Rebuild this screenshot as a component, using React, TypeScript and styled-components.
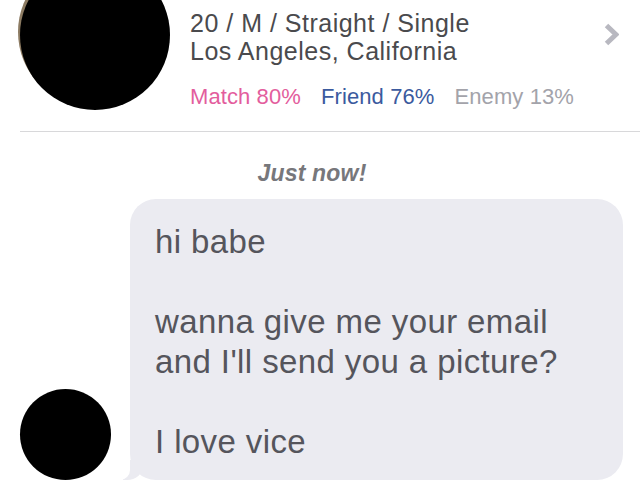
import styled, { createGlobalStyle } from 'styled-components';

const GlobalStyle = createGlobalStyle`
  html, body {
    margin: 0;
    padding: 0;
    background: #ffffff;
    overflow: hidden;
  }

  body {
    font-family: 'Liberation Sans', Arial, sans-serif;
  }
`;

const Page = styled.div`
  width: 640px;
  height: 489px;
  overflow: hidden;
  background: #ffffff;
`;

const ProfileRow = styled.div`
  display: flex;
  align-items: flex-start;
  padding: 0 21px 0 20px;
`;

const Avatar = styled.div<{ size: number }>`
  flex: none;
  width: ${({ size }) => size}px;
  height: ${({ size }) => size}px;
  border-radius: 50%;
  background: #000;
`;

const ProfileAvatar = styled(Avatar)`
  margin-top: -40px;
  box-shadow: -2px -3px 0 0 #8c7b62;
`;

const ProfileInfo = styled.div`
  display: flex;
  flex-direction: column;
  margin-left: 20px;
  padding-top: 9px;
`;

const InfoLine = styled.div`
  font-size: 25px;
  line-height: 28px;
  letter-spacing: 0.5px;
  color: #4a4a4d;
  white-space: nowrap;
`;

const ScoreRow = styled.div`
  display: flex;
  gap: 20px;
  margin-top: 19px;
`;

const Score = styled.span<{ tone: string }>`
  font-size: 22px;
  line-height: 26px;
  letter-spacing: 0.1px;
  color: ${({ tone }) => tone};
  white-space: nowrap;
`;

const Chevron = styled.svg`
  margin-left: auto;
  margin-top: 23px;
  flex: none;
`;

const Divider = styled.div`
  height: 1px;
  margin: 21px 0 0 20px;
  background: #d8d8da;
`;

const Timestamp = styled.div`
  margin-top: 28px;
  padding-right: 16px;
  text-align: center;
  font-size: 23px;
  line-height: 26px;
  font-weight: bold;
  font-style: italic;
  letter-spacing: 0.2px;
  color: #77777b;
`;

const ChatRow = styled.div`
  display: flex;
  align-items: flex-end;
  gap: 19px;
  margin-top: 13px;
  padding-left: 20px;
`;

const Bubble = styled.div`
  position: relative;
  flex: none;
  width: 493px;
  box-sizing: border-box;
  padding: 23px 25px 18px;
  border-radius: 26px;
  background: #ebebf1;
  color: #55555c;
  font-size: 33px;
  line-height: 40px;
  letter-spacing: 0.4px;

  &::before {
    content: '';
    position: absolute;
    bottom: 0;
    left: -7px;
    width: 20px;
    height: 20px;
    background: #ebebf1;
    border-bottom-right-radius: 16px 14px;
  }

  &::after {
    content: '';
    position: absolute;
    bottom: 0;
    left: -26px;
    width: 26px;
    height: 20px;
    background: #ffffff;
    border-bottom-right-radius: 10px;
  }
`;

const Line = styled.div`
  min-height: 40px;
  white-space: nowrap;
`;

const scores = [
  { label: 'Match 80%', tone: '#e35d9d' },
  { label: 'Friend 76%', tone: '#3b5a9e' },
  { label: 'Enemy 13%', tone: '#a3a3aa' },
];

const messageLines = [
  'hi babe',
  '',
  'wanna give me your email',
  "and I'll send you a picture?",
  '',
  'I love vice',
];

export default function App() {
  return (
    <Page>
      <GlobalStyle />
      <ProfileRow>
        <ProfileAvatar size={150} />
        <ProfileInfo>
          <InfoLine>20 / M / Straight / Single</InfoLine>
          <InfoLine>Los Angeles, California</InfoLine>
          <ScoreRow>
            {scores.map((s) => (
              <Score key={s.label} tone={s.tone}>
                {s.label}
              </Score>
            ))}
          </ScoreRow>
        </ProfileInfo>
        <Chevron width="15" height="23" viewBox="0 0 15 23">
          <path d="M2.5 2.5 L12 11.5 L2.5 20.5" fill="none" stroke="#b8b8c0" strokeWidth="5" strokeLinejoin="miter" />
        </Chevron>
      </ProfileRow>
      <Divider />
      <Timestamp>Just now!</Timestamp>
      <ChatRow>
        <Avatar size={91} />
        <Bubble>
          {messageLines.map((line, index) => (
            <Line key={index}>{line}</Line>
          ))}
        </Bubble>
      </ChatRow>
    </Page>
  );
}
